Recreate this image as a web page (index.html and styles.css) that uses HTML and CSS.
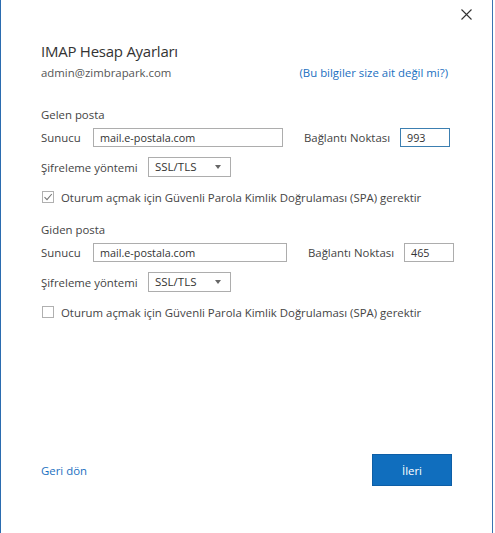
FILE: index.html
```html
<!DOCTYPE html>
<html lang="tr">
<head>
<meta charset="utf-8">
<link rel="stylesheet" href="styles.css">
</head>
<body>
<div class="window">
  <div class="topbar">
    <svg class="close" width="11" height="11" viewBox="0 0 11 11"><path d="M0.5 0.5 L10.5 10.5 M10.5 0.5 L0.5 10.5" stroke="#333" stroke-width="1.1" fill="none"/></svg>
  </div>
  <div class="content">
    <h1 class="title">IMAP Hesap Ayarları</h1>
    <div class="account">
      <span class="email">admin@zimbrapark.com</span>
      <span class="link">(Bu bilgiler size ait değil mi?)</span>
    </div>

    <section class="group group-in">
      <div class="group-title">Gelen posta</div>
      <div class="row">
        <span class="label server-label">Sunucu</span>
        <div class="input server">mail.e-postala.com</div>
        <span class="label port-label">Bağlantı Noktası</span>
        <div class="input port focused">993</div>
      </div>
      <div class="row row-enc">
        <span class="label enc-label">Şifreleme yöntemi</span>
        <div class="select">SSL/TLS<span class="caret"></span></div>
      </div>
      <div class="check-row">
        <span class="checkbox checked"><svg width="10" height="10" viewBox="0 0 10 10"><path d="M1.5 5.2 L4 7.6 L8.8 2" stroke="#777" stroke-width="1.1" fill="none"/></svg></span>
        <span class="check-label">Oturum açmak için Güvenli Parola Kimlik Doğrulaması (SPA) gerektir</span>
      </div>
    </section>

    <section class="group group-out">
      <div class="group-title">Giden posta</div>
      <div class="row">
        <span class="label server-label">Sunucu</span>
        <div class="input server wide">mail.e-postala.com</div>
        <span class="label port-label">Bağlantı Noktası</span>
        <div class="input port">465</div>
      </div>
      <div class="row row-enc">
        <span class="label enc-label">Şifreleme yöntemi</span>
        <div class="select">SSL/TLS<span class="caret"></span></div>
      </div>
      <div class="check-row">
        <span class="checkbox"></span>
        <span class="check-label">Oturum açmak için Güvenli Parola Kimlik Doğrulaması (SPA) gerektir</span>
      </div>
    </section>

    <div class="spacer"></div>

    <div class="footer">
      <span class="back">Geri dön</span>
      <button class="next">İleri</button>
    </div>
  </div>
</div>
</body>
</html>
```

FILE: styles.css
```css
* { box-sizing: border-box; }
html, body { margin: 0; padding: 0; background: #fff; }
body {
  font-family: "Open Sans", "Noto Sans", sans-serif;
  color: #444;
  width: 495px;
  height: 533px;
  overflow: hidden;
}
.window {
  width: 493px;
  height: 533px;
  border-left: 1px solid #2b6cb0;
  border-right: 1px solid #3a73b0;
  background: #fff;
  display: flex;
  flex-direction: column;
}
.topbar {
  display: flex;
  justify-content: flex-end;
  padding: 9px 20px 0 0;
  height: 22px;
}
.close { display: block; }
.content {
  flex: 1;
  display: flex;
  flex-direction: column;
  padding: 18px 40px 0 40px;
}
.title {
  margin: 0;
  font-weight: 400;
  font-size: 15px;
  line-height: 22px;
  color: #333;
  letter-spacing: -0.25px;
}
.account {
  display: flex;
  justify-content: space-between;
  margin-top: 2px;
  font-size: 11.4px;
  line-height: 18px;
  padding-right: 4px;
}
.email { color: #555; }
.link { color: #1a6fbf; }
.group { display: flex; flex-direction: column; }
.group-in { margin-top: 25px; }
.group-out { margin-top: 17px; }
.group-title {
  font-size: 11.4px;
  line-height: 16px;
  color: #444;
}
.label {
  font-size: 11.4px;
  color: #444;
  white-space: nowrap;
  flex-shrink: 0;
}
.server-label { width: 52px; }
.enc-label { width: 107px; }
.row {
  display: flex;
  align-items: center;
  margin-top: 5px;
  height: 19px;
}
.input {
  height: 19px;
  border: 1px solid #adadad;
  font-size: 10.8px;
  line-height: 17px;
  padding-left: 6px;
  color: #333;
  flex-shrink: 0;
}
.server { width: 190px; }
.server.wide { width: 194px; }
.port-label { margin-left: 21px; width: 96px; }
.port { width: 50px; }
.port.focused { border-color: #3c7fb1; }
.row-enc { margin-top: 10px; height: 20px; }
.select {
  width: 83px;
  height: 20px;
  border: 1px solid #adadad;
  font-size: 11.5px;
  line-height: 18px;
  padding-left: 6px;
  color: #333;
  display: flex;
  align-items: center;
  justify-content: space-between;
  padding-right: 9px;
}
.caret {
  width: 0; height: 0;
  border-left: 3.5px solid transparent;
  border-right: 3.5px solid transparent;
  border-top: 4px solid #666;
}
.check-row {
  display: flex;
  align-items: center;
  margin-top: 12px;
  height: 16px;
}
.checkbox {
  width: 12px;
  height: 12px;
  border: 1px solid #b0b0b0;
  display: flex;
  align-items: center;
  justify-content: center;
  margin-left: 1px;
  flex-shrink: 0;
}
.check-label {
  margin-left: 7px;
  font-size: 11.4px;
  color: #444;
  white-space: nowrap;
}
.spacer { flex: 1; }
.footer {
  display: flex;
  justify-content: space-between;
  align-items: center;
  margin-bottom: 47px;
}
.back {
  font-size: 11.4px;
  color: #1a6fbf;
}
.next {
  width: 80px;
  height: 32px;
  background: #106ebe;
  border: 1px solid #0d5ea6;
  color: #fff;
  font-family: "Open Sans", "Noto Sans", sans-serif;
  font-size: 11.4px;
  padding: 0;
}
```
